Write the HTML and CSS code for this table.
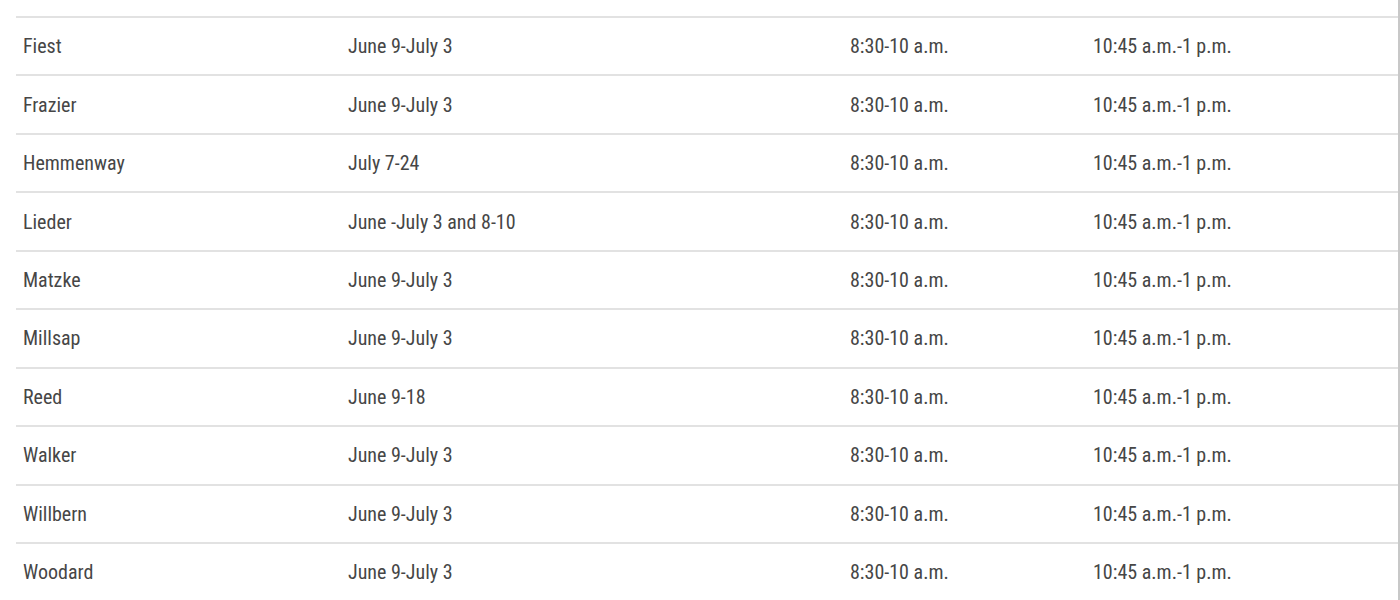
FILE: index.html
```html
<!DOCTYPE html>
<html lang="en">
<head>
    <meta charset="UTF-8">
    <title>Summer school schedule</title>
    <link rel="stylesheet" href="styles.css">
</head>
<body>
<div class="wrap">
    <table class="schedule">
        <colgroup>
            <col class="c-school">
            <col class="c-dates">
            <col class="c-breakfast">
            <col class="c-lunch">
        </colgroup>
        <tbody>
            <tr><td>Fiest</td><td>June 9-July 3</td><td>8:30-10 a.m.</td><td>10:45 a.m.-1 p.m.</td></tr>
            <tr><td>Frazier</td><td>June 9-July 3</td><td>8:30-10 a.m.</td><td>10:45 a.m.-1 p.m.</td></tr>
            <tr><td>Hemmenway</td><td>July 7-24</td><td>8:30-10 a.m.</td><td>10:45 a.m.-1 p.m.</td></tr>
            <tr><td>Lieder</td><td>June -July 3 and 8-10</td><td>8:30-10 a.m.</td><td>10:45 a.m.-1 p.m.</td></tr>
            <tr><td>Matzke</td><td>June 9-July 3</td><td>8:30-10 a.m.</td><td>10:45 a.m.-1 p.m.</td></tr>
            <tr><td>Millsap</td><td>June 9-July 3</td><td>8:30-10 a.m.</td><td>10:45 a.m.-1 p.m.</td></tr>
            <tr><td>Reed</td><td>June 9-18</td><td>8:30-10 a.m.</td><td>10:45 a.m.-1 p.m.</td></tr>
            <tr><td>Walker</td><td>June 9-July 3</td><td>8:30-10 a.m.</td><td>10:45 a.m.-1 p.m.</td></tr>
            <tr><td>Willbern</td><td>June 9-July 3</td><td>8:30-10 a.m.</td><td>10:45 a.m.-1 p.m.</td></tr>
            <tr><td>Woodard</td><td>June 9-July 3</td><td>8:30-10 a.m.</td><td>10:45 a.m.-1 p.m.</td></tr>
        </tbody>
    </table>
</div>
</body>
</html>
```

FILE: styles.css
```css
html, body {
    margin: 0;
    padding: 0;
    background: #fff;
}

.wrap {
    width: 1382px;
    padding: 16px 0 0 16px;
    border-right: 2px solid #c8c8c8;
    min-height: 584px;
}

.schedule {
    width: 100%;
    border-collapse: collapse;
    table-layout: fixed;
    font-family: "Roboto Condensed", "Roboto", "Liberation Sans Narrow", sans-serif;
    font-stretch: condensed;
    font-size: 20px;
    color: #464646;
}

.c-school { width: 325px; }
.c-dates { width: 502px; }
.c-breakfast { width: 243px; }

.schedule td {
    height: 56.45px;
    padding: 0 0 0 7px;
    border-top: 2px solid #e2e2e2;
    vertical-align: middle;
    white-space: nowrap;
}
```
